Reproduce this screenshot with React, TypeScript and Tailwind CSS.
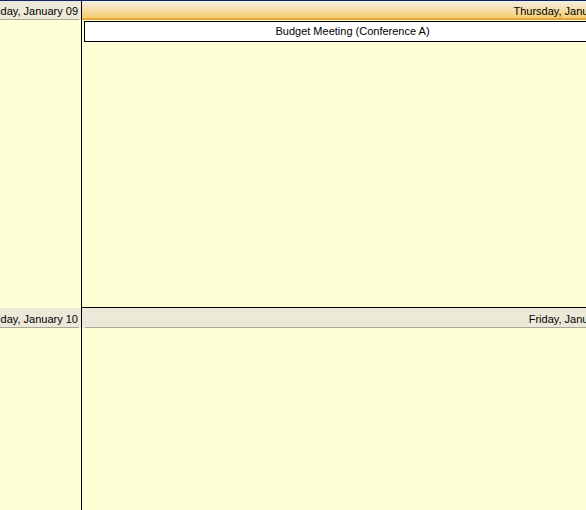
import React from "react";

export default function App() {
  return (
    <div
      className="w-[586px] h-[510px] overflow-hidden bg-[#FFFFD5] text-[11px] text-black"
      style={{ fontFamily: '"Liberation Sans", Arial, sans-serif' }}
    >
      <div className="w-[700px] h-px bg-[#0A246A]" />
      {/* Row 1 */}
      <div className="flex h-[307px] w-[700px]">
        <div className="w-[82px] shrink-0 border-r border-black flex flex-col">
          <div className="h-[19px] bg-[#ECE9D8] flex">
            <div className="flex-1 mr-[2px] border-b border-[#ACA899] flex items-center justify-end overflow-hidden whitespace-nowrap pr-[1px] pt-[3px]">
              Thursday, January 09
            </div>
          </div>
        </div>
        <div className="w-[541px] shrink-0 border-b border-black flex flex-col">
          <div className="h-[19px] bg-gradient-to-b from-[#F2EEE2] to-[#F8CE6C] border-b-2 border-[#E5A43E] flex items-center justify-end pr-[4px] pt-[3px] whitespace-nowrap">
            Thursday, January 09
          </div>
          <div className="mt-[1px] ml-[2px] mr-[2px] h-[21px] bg-white border border-black flex items-center justify-center whitespace-nowrap">
            Budget Meeting (Conference A)
          </div>
        </div>
      </div>
      {/* Row 2 */}
      <div className="flex h-[202px] w-[700px]">
        <div className="w-[82px] shrink-0 border-r border-black flex flex-col">
          <div className="h-[20px] bg-[#ECE9D8] flex">
            <div className="flex-1 mr-[2px] border-b border-[#ACA899] flex items-center justify-end overflow-hidden whitespace-nowrap pr-[1px] pt-[3px]">
              Friday, January 10
            </div>
          </div>
        </div>
        <div className="w-[541px] shrink-0 flex flex-col">
          <div className="h-[20px] bg-[#ECE9D8] flex">
            <div className="flex-1 ml-[3px] border-b border-[#ACA899] flex items-center justify-end pr-[4px] pt-[3px] whitespace-nowrap">
              Friday, January 10
            </div>
          </div>
        </div>
      </div>
    </div>
  );
}
